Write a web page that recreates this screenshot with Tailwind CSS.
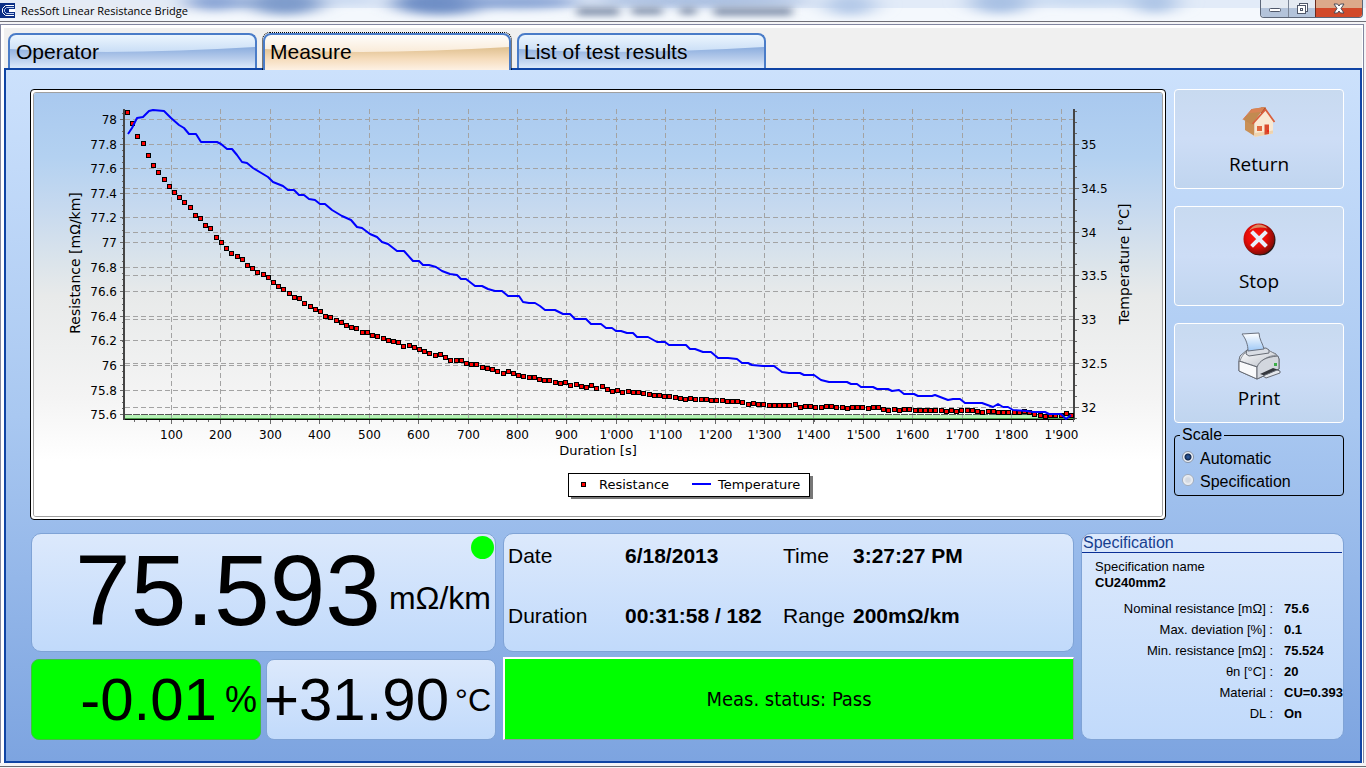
<!DOCTYPE html>
<html lang="en">
<head>
    <meta charset="UTF-8">
    <meta name="viewport" content="width=device-width, initial-scale=1.0">
    <title>ResSoft Linear Resistance Bridge</title>
    <script src="https://cdn.jsdelivr.net/npm/@tailwindcss/browser@4"></script>
</head>
<body class="min-h-screen flex flex-col bg-[#f4f4f6] font-['Liberation_Sans',Arial,sans-serif] text-black">

<!-- Title bar -->
<header class="relative h-[22px] flex items-start justify-between overflow-hidden border-b border-[#707078] bg-white">
    <svg class="absolute inset-0 w-full h-full" viewBox="0 0 1366 21" preserveAspectRatio="none" aria-hidden="true">
        <defs>
            <filter id="haze" x="-20%" y="-100%" width="140%" height="300%"><feGaussianBlur stdDeviation="12 4"/></filter>
            <filter id="smudge" x="-20%" y="-100%" width="140%" height="300%"><feGaussianBlur stdDeviation="5 3"/></filter>
        </defs>
        <rect width="1366" height="21" fill="#f4f8fd"/>
        <rect width="1366" height="8" fill="#e2ebf8"/>
        <g filter="url(#haze)">
            <ellipse cx="80" cy="10" rx="110" ry="9" fill="#e6ebf4"/>
            <ellipse cx="215" cy="2" rx="30" ry="9" fill="#8ba6d6"/>
            <ellipse cx="285" cy="3" rx="38" ry="12" fill="#7f9ccc"/>
            <ellipse cx="350" cy="0" rx="30" ry="3" fill="#b9cdec"/>
            <ellipse cx="440" cy="3" rx="48" ry="12" fill="#6f8fc6"/>
            <ellipse cx="520" cy="2" rx="60" ry="7" fill="#8ba6d6"/>
            <ellipse cx="700" cy="1" rx="110" ry="6" fill="#a5bbdf"/>
            <ellipse cx="850" cy="5" rx="25" ry="11" fill="#b4c9e8"/>
            <ellipse cx="1000" cy="2" rx="30" ry="12" fill="#a9c1e4"/>
            <ellipse cx="1090" cy="0" rx="60" ry="6" fill="#c5d8f1"/>
            <ellipse cx="1155" cy="2" rx="22" ry="12" fill="#adc5e6"/>
        </g>
        <g filter="url(#smudge)" fill="#8d9bb4">
            <rect x="577" y="7" width="42" height="9"/>
            <rect x="632" y="7" width="30" height="8"/>
            <rect x="680" y="7" width="16" height="8"/>
            <rect x="714" y="7" width="78" height="9"/>
        </g>
    </svg>
    <div class="relative flex items-center gap-[6px] h-[21px]">
        <svg class="w-[15px] h-[15px]" viewBox="0 0 15 15" aria-hidden="true">
            <rect width="15" height="15" fill="#0b2f86"/>
            <path d="M14 2.500H5.500L2.500 5.500v4l3 3H14" fill="none" stroke="#fff"/>
            <path d="M14 4.500H6.500L4.500 6.500v2l2 2H14" fill="none" stroke="#b9cdf4"/>
            <rect x="9" y="6" width="6" height="3" fill="#fff"/>
        </svg>
        <h1 class="font-['Open_Sans',sans-serif] text-[11px] leading-[20px]">ResSoft Linear Resistance Bridge</h1>
    </div>
    <div class="relative flex h-[18px] mr-[3px] rounded-b-[4px] border border-t-0 border-[#5c6678] overflow-hidden">
        <button type="button" aria-label="Minimize" class="w-[28px] flex items-center justify-center border-r border-[#7b8596] bg-linear-to-b from-[#e4eaf2] from-45% to-[#b3c3da] to-50%">
            <svg width="14" height="14" viewBox="0 0 14 14"><rect x="1.500" y="6.500" width="11" height="3" rx="1" fill="#fff" stroke="#50586a"/></svg>
        </button>
        <button type="button" aria-label="Restore" class="w-[26px] flex items-center justify-center bg-linear-to-b from-[#e4eaf2] from-45% to-[#b3c3da] to-50%">
            <svg width="14" height="14" viewBox="0 0 14 14" fill="#fff" stroke="#50586a"><rect x="4.500" y="1.500" width="8" height="8"/><rect x="2.500" y="3.500" width="8" height="8"/><rect x="5.500" y="6.500" width="2" height="2"/></svg>
        </button>
        <button type="button" aria-label="Close" class="w-[47px] flex items-center justify-center border-l border-[#6b2a1c] bg-linear-to-b from-[#dca98a] from-45% to-[#d2492a] to-50%">
            <svg width="14" height="14" viewBox="0 0 14 14"><path d="M2 2h3.500L7 4l1.500-2H12L9 6.500l3 4.500H8.500L7 9l-1.500 2H2l3-4.500z" fill="#fff" stroke="#4a4a58"/></svg>
        </button>
    </div>
</header>

<main class="flex-1 flex flex-col mt-[2px] mr-[2px] border-x border-t border-[#8286a0] bg-white pl-[3px] pr-[1px] pt-[3px]">
    <div class="flex-1 flex flex-col bg-[#f0f0f0]">

        <!-- Tabs -->
        <nav class="flex items-end gap-[5px] pt-[4px] pl-[4px] text-[21px] leading-[24px]">
            <button type="button" class="relative w-[249px] h-[35px] pl-[6px] text-left border-2 border-b-0 border-[#4a7cc8] rounded-t-[8px] overflow-hidden bg-linear-to-b from-[#ecf6fe] to-[#a9c6ee]">
                <svg class="absolute inset-0 w-full h-full" viewBox="0 0 245 33" preserveAspectRatio="none" aria-hidden="true"><path d="M0 14C80 19 160 17 245 12V33H0z" fill="url(#blueGloss)"/></svg>
                <span class="relative">Operator</span>
            </button>
            <div class="relative z-10 -mb-[2px] border border-b-0 border-dotted border-black rounded-t-[8px]">
                <button type="button" class="relative block w-[248px] h-[37px] pl-[5px] pb-[2px] text-left border-2 border-b-0 border-[#4a7cc8] rounded-t-[8px] overflow-hidden bg-linear-to-b from-[#fefdfb] to-[#f4d8b4]">
                    <svg class="absolute inset-0 w-full h-full" viewBox="0 0 245 35" preserveAspectRatio="none" aria-hidden="true"><path d="M0 14C80 19 160 17 245 12V35H0z" fill="url(#goldGloss)"/></svg>
                    <span class="relative">Measure</span>
                </button>
            </div>
            <button type="button" class="relative w-[249px] h-[35px] pl-[5px] text-left border-2 border-b-0 border-[#4a7cc8] rounded-t-[8px] overflow-hidden bg-linear-to-b from-[#ecf6fe] to-[#a9c6ee]">
                <svg class="absolute inset-0 w-full h-full" viewBox="0 0 245 33" preserveAspectRatio="none" aria-hidden="true"><path d="M0 14C80 19 160 17 245 12V33H0z" fill="url(#blueGloss)"/></svg>
                <span class="relative">List of test results</span>
            </button>
            <svg class="absolute w-0 h-0" aria-hidden="true">
                <defs>
                    <linearGradient id="blueGloss" x2="0" y2="1"><stop offset="0" stop-color="#8badde"/><stop offset=".5" stop-color="#b3c9ea"/><stop offset="1" stop-color="#dbe9fb"/></linearGradient>
                    <linearGradient id="goldGloss" x2="0" y2="1"><stop offset="0" stop-color="#dfc08f"/><stop offset=".5" stop-color="#f5dbba"/><stop offset="1" stop-color="#fdf1e4"/></linearGradient>
                </defs>
            </svg>
        </nav>

        <section class="flex-1 border-2 border-[#0f44a4] pt-[19px] pl-[24px] pr-[16px] pb-[20px] bg-linear-to-b from-[#cce1fc] via-[#a9c8f1] via-50% to-[#7da4e0]">
            <div class="flex items-start gap-[8px]">

                <!-- Chart -->
                <div class="flex-1 min-w-0 border border-black rounded-[4px] bg-white p-[2px]">
                    <div class="border border-[#a0a0a0] rounded-[3px] overflow-hidden">
                        <svg id="chart" class="block w-full font-['DejaVu_Sans',Verdana,sans-serif] text-[12px]" viewBox="34 93 1128 423">
                            <defs>
                                <linearGradient id="sky" x2="0" y2="1">
                                    <stop offset="0" stop-color="#a9c9ef"/>
                                    <stop offset=".15" stop-color="#b3d1f1"/>
                                    <stop offset=".27" stop-color="#c6d9ef"/>
                                    <stop offset=".4" stop-color="#dbe4eb"/>
                                    <stop offset=".48" stop-color="#e8eaea"/>
                                    <stop offset=".72" stop-color="#f4f4f4"/>
                                    <stop offset=".87" stop-color="#fff"/>
                                </linearGradient>
                            </defs>
                            <rect x="34" y="93" width="1128" height="423" fill="url(#sky)"/>
                            <rect x="125" y="415" width="949" height="3" fill="#b6f2b6"/>
                            <rect x="125" y="418" width="949" height="1" fill="#4c9a4c"/>
                            <g id="grid" stroke="#a3a3a3" stroke-dasharray="5 3"></g>
                            <path d="M125 414.500H1074" stroke="#555" stroke-dasharray="7 1"/>
                            <g id="ticks" stroke="#6a6a6a"></g>
                            <path d="M125 419.500H1074" stroke="#000"/>
                            <path d="M124 109V420M1074 109V420" stroke="#454545" stroke-width="2"/>
                            <g id="points" fill="#f00" stroke="#000"></g>
                            <path id="temperature" fill="none" stroke="#00f" stroke-width="2" stroke-linejoin="round"/>
                            <g id="labels"></g>
                            <g text-anchor="middle">
                                <text class="text-[13px]" x="598" y="455">Duration [s]</text>
                                <text class="text-[14px]" transform="translate(80 263) rotate(-90)">Resistance [mΩ/km]</text>
                                <text class="text-[14px]" transform="translate(1129 264) rotate(-90)">Temperature [°C]</text>
                            </g>
                            <!-- Legend -->
                            <rect x="571" y="476" width="242" height="23" fill="#555" opacity=".8"/>
                            <rect x="568.500" y="473.500" width="241" height="23" fill="#fff" stroke="#000"/>
                            <rect x="581.500" y="482.500" width="4" height="4" fill="#f00" stroke="#000"/>
                            <path d="M692 484H711" stroke="#00f" stroke-width="2"/>
                            <g class="text-[13px]">
                                <text x="599" y="489">Resistance</text>
                                <text x="718" y="489">Temperature</text>
                            </g>
                        </svg>
                    </div>
                </div>

                <!-- Actions -->
                <aside class="w-[170px] flex flex-col gap-[3px]">
                    <div class="flex flex-col gap-[17px] font-['Open_Sans',sans-serif] text-[19px] leading-[28px]">
                        <button type="button" class="h-[100px] flex flex-col items-center gap-[4px] pt-[8px] border border-white rounded-[4px] bg-linear-to-b from-[#c8daf0] via-[#cdddf6] via-50% to-[#c0d5ef]">
                            <svg width="48" height="48" viewBox="0 0 48 48" aria-hidden="true">
                                <path d="M26 9.500h5v8h-5z" fill="#a5542c"/>
                                <path d="M10 23v9l9.500 6V24l-4-5z" fill="#c98f55"/>
                                <path d="M19.500 22.500 30.500 12 38 23v12.500L19.500 39z" fill="#f9e8d2"/>
                                <path d="M19.500 39 38 35.500v-3L19.500 35z" fill="#efd3ae"/>
                                <path d="M8 21.500 17 11l13-2-11.500 15.500-2 2z" fill="#c28a50"/>
                                <path d="m17 11 13-2-3.500 5-12 1z" fill="#d98355"/>
                                <path d="m17.500 26 13-14.500L39.500 24" fill="none" stroke="#d95f3c" stroke-width="1.800"/>
                                <path d="M8 21.500 17 11" stroke="#dd7a55"/>
                                <rect x="22" y="28" width="5" height="5" fill="#e0683f"/>
                                <path d="M29.500 26.500h4.500v9.500l-4.500.8z" fill="#d94a2d"/>
                                <circle cx="33" cy="33" r=".8" fill="#f00"/>
                            </svg>
                            Return
                        </button>
                        <button type="button" class="h-[100px] flex flex-col items-center gap-[4px] pt-[8px] border border-white rounded-[4px] bg-linear-to-b from-[#c8daf0] via-[#cdddf6] via-50% to-[#c0d5ef]">
                            <svg width="48" height="48" viewBox="0 0 48 48" aria-hidden="true">
                                <defs>
                                    <radialGradient id="stopRed" cx=".42" cy=".42" r=".65"><stop offset="0" stop-color="#ff1a12"/><stop offset=".5" stop-color="#e80c08"/><stop offset="1" stop-color="#6e0c06"/></radialGradient>
                                </defs>
                                <circle cx="25" cy="25" r="15.500" fill="#241a18"/>
                                <circle cx="24" cy="24" r="15.500" fill="url(#stopRed)"/>
                                <path d="M14 16C17 11 21 9.500 24 9.500s6 1 8.500 4C27 12 19 12 14 16z" fill="#d98a62"/>
                                <path d="m18 18 12 12m0-12L18 30" stroke="#e6effb" stroke-width="4" stroke-linecap="square"/>
                            </svg>
                            Stop
                        </button>
                        <button type="button" class="h-[100px] flex flex-col items-center gap-[4px] pt-[8px] border border-white rounded-[4px] bg-linear-to-b from-[#c8daf0] via-[#cdddf6] via-50% to-[#c0d5ef]">
                            <svg width="48" height="48" viewBox="0 0 48 48" stroke-linejoin="round" aria-hidden="true">
                                <defs>
                                    <linearGradient id="paper" x2="0" y2="1"><stop offset="0" stop-color="#fff"/><stop offset="1" stop-color="#9ec8f6"/></linearGradient>
                                    <linearGradient id="lid" x2="1" y2="1"><stop offset="0" stop-color="#fff"/><stop offset="1" stop-color="#b9bec8"/></linearGradient>
                                </defs>
                                <path d="M4 28 5 24l7-6h20l9 4 3 5v10l-22 10L4 39z" fill="#eceef2" stroke="#666b74"/>
                                <path d="M5 29c1-4 4-8 8-10l20-1 9 5c-9 1-15 4-19 12z" fill="url(#lid)" stroke="#8b9099"/>
                                <path d="m4 29 18 6v12L4 39z" fill="#f8f9fb" stroke="#666b74"/>
                                <path d="M22 35c3-7 9-10 21-11l1 3v10l-22 10z" fill="#d3d7de" stroke="#666b74"/>
                                <path d="m11 22 1-4 19-2 3 2v3l-20 3z" fill="#d9dde4" stroke="#666b74"/>
                                <path d="M7 2 24 1c0 6 4 11 5 16l-16 2C13 13 11 7 7 2z" fill="url(#paper)" stroke="#6b7280"/>
                                <path d="m25 42 13-6 6 2-13 6z" fill="#34373d"/>
                                <path d="m28 44 14-6 3 1v2l-14 5z" fill="#e4e7ec" stroke="#666b74"/>
                                <rect x="39" y="31" width="3" height="3" fill="#3fae4a"/>
                            </svg>
                            Print
                        </button>
                    </div>
                    <fieldset class="border border-black rounded-[4px] pl-[7px] pr-[5px] pt-[3px] pb-[2px] text-[16px] leading-[23px]">
                        <legend class="-ml-[2px] px-[2px] leading-[18px]">Scale</legend>
                        <label class="flex items-center gap-[6px] h-[23px]">
                            <input type="radio" name="scale" checked class="appearance-none w-[12px] h-[12px] -mt-[4px] rounded-full border border-[#8a96a8] bg-[radial-gradient(circle,#2a5596_0_1px,#12294f_3px,#eef2f8_4px)]">
                            Automatic
                        </label>
                        <label class="flex items-center gap-[6px] h-[23px]">
                            <input type="radio" name="scale" class="appearance-none w-[12px] h-[12px] -mt-[4px] rounded-full border border-[#a3adbb] bg-[radial-gradient(circle,#d3d9e2_0_2px,#f4f6f9_5px)]">
                            Specification
                        </label>
                    </fieldset>
                </aside>
            </div>

            <!-- Readings -->
            <div class="grid grid-cols-[465fr_571fr_263fr] gap-[7px] mt-[13px] pl-[1px]">
                <div class="min-w-0 flex flex-col gap-[7px]">
                    <div class="relative h-[119px] flex items-center justify-end rounded-[10px] border border-[#7fa3d6] pr-[4px] bg-linear-to-b from-[#dce9fc] to-[#c1dafb]">
                        <span class="text-[100px] leading-[100px] pb-[6px]">75.593</span>
                        <span class="text-[32px] ml-[8px] mt-[10px]">mΩ/km</span>
                        <span class="absolute top-[2px] right-px w-[23px] h-[23px] rounded-full bg-[#00ff00]"></span>
                    </div>
                    <div class="grid grid-cols-2 gap-[5px]">
                        <div class="h-[81px] flex items-center justify-end rounded-[8px] border border-[#3fc040] pr-[3px] bg-[#00ff00] leading-[60px]">
                            <span class="text-[60px]">-0.01</span>
                            <span class="text-[36px] ml-[8px]">%</span>
                        </div>
                        <div class="h-[81px] flex items-center justify-end rounded-[8px] border border-[#7fa3d6] pr-[4px] bg-linear-to-b from-[#dce9fc] to-[#c1dafb] leading-[60px]">
                            <span class="text-[60px]">+31.90</span>
                            <span class="text-[32px] ml-[6px]">°C</span>
                        </div>
                    </div>
                </div>

                <div class="min-w-0 flex flex-col gap-[5px]">
                    <div class="h-[119px] grid grid-cols-[117px_158px_70px_1fr] content-start gap-y-[36px] rounded-[10px] border border-[#7fa3d6] pl-[4px] pt-[10px] text-[21px] leading-[24px] bg-linear-to-b from-[#dce9fc] to-[#c1dafb]">
                        <span>Date</span>
                        <b>6/18/2013</b>
                        <span>Time</span>
                        <b>3:27:27 PM</b>
                        <span>Duration</span>
                        <b>00:31:58 / 182</b>
                        <span>Range</span>
                        <b>200mΩ/km</b>
                    </div>
                    <div class="h-[83px] flex items-center justify-center border-t-2 border-l-2 border-b border-r border-t-white border-l-white border-b-[#8a98a8] border-r-[#8a98a8] bg-[#00ff00] font-['DejaVu_Sans_Condensed','DejaVu_Sans',sans-serif] text-[20px]">Meas. status: Pass</div>
                </div>

                <div class="min-w-0 rounded-[10px] border border-[#7fa3d6] text-[13px] bg-linear-to-b from-[#dce9fc] to-[#c1dafb]">
                    <h2 class="border-b border-[#0a2f96] pl-px mr-px text-[16px] leading-[18px] text-[#173f8f]">Specification</h2>
                    <p class="pl-[13px] pt-[6px] leading-[16px]">Specification name<br><b>CU240mm2</b></p>
                    <table class="mt-[7px] leading-[21px] whitespace-nowrap">
                        <tbody>
                        <tr><th class="w-[191px] p-0 text-right font-normal">Nominal resistance [mΩ] :</th><td class="py-0 pl-[11px] font-bold">75.6</td></tr>
                        <tr><th class="p-0 text-right font-normal">Max. deviation [%] :</th><td class="py-0 pl-[11px] font-bold">0.1</td></tr>
                        <tr><th class="p-0 text-right font-normal">Min. resistance [mΩ] :</th><td class="py-0 pl-[11px] font-bold">75.524</td></tr>
                        <tr><th class="p-0 text-right font-normal">θn [°C] :</th><td class="py-0 pl-[11px] font-bold">20</td></tr>
                        <tr><th class="p-0 text-right font-normal">Material :</th><td class="py-0 pl-[11px] font-bold">CU=0.393</td></tr>
                        <tr><th class="p-0 text-right font-normal">DL :</th><td class="py-0 pl-[11px] font-bold">On</td></tr>
                        </tbody>
                    </table>
                </div>
            </div>
        </section>
    </div>
</main>
<footer class="mt-[3px] h-[2px] border-t border-[#6a6a70]"></footer>

<script>
    // Marker heights, one per sample (182 samples)
    const resistance = [
        112, 123, 136, 143, 155, 165, 172, 179, 186, 192, 197, 202, 207, 215, 218, 225, 228, 237, 242, 248,
        253, 256, 259, 265, 268, 272, 274, 277, 282, 286, 289, 293, 297, 298, 303, 306, 309, 311, 316, 317,
        320, 322, 325, 327, 328, 332, 332, 335, 336, 338, 340, 341, 342, 346, 345, 347, 349, 351, 353, 355,
        354, 357, 360, 360, 360, 363, 364, 364, 367, 368, 369, 371, 373, 371, 373, 375, 376, 377, 377, 379,
        380, 380, 382, 383, 382, 385, 384, 386, 387, 385, 388, 386, 389, 391, 390, 392, 391, 392, 392, 393,
        394, 395, 395, 396, 396, 397, 398, 399, 398, 399, 399, 399, 400, 400, 400, 401, 401, 401, 402, 404,
        403, 404, 404, 405, 405, 405, 405, 405, 404, 407, 406, 406, 407, 407, 406, 406, 407, 407, 408, 407,
        407, 407, 408, 407, 407, 409, 410, 409, 410, 409, 409, 410, 410, 410, 410, 410, 410, 411, 410, 411,
        410, 410, 410, 411, 412, 411, 411, 412, 412, 412, 412, 412, 411, 412, 414, 415, 416, 415, 415, 415,
        413, 415
    ];

    // Temperature curve
    const temperature = [
        [128, 134], [132, 128], [137, 118], [143, 117], [149, 111], [153, 110], [164, 111], [171, 118], [179, 125], [184, 128],
        [189, 134], [196, 134], [201, 142], [217, 142], [221, 144], [227, 149], [232, 149], [237, 155], [242, 162], [247, 163],
        [253, 168], [268, 177], [273, 182], [283, 186], [288, 190], [294, 190], [299, 195], [304, 195], [309, 199], [315, 200],
        [320, 204], [325, 204], [332, 210], [342, 216], [351, 220], [357, 227], [362, 228], [370, 234], [377, 237], [382, 242],
        [388, 244], [397, 251], [404, 251], [413, 261], [419, 261], [423, 265], [429, 265], [436, 267], [442, 271], [450, 274],
        [457, 275], [461, 279], [466, 279], [475, 286], [482, 286], [488, 289], [495, 291], [502, 291], [508, 296], [519, 296],
        [523, 302], [529, 303], [535, 303], [540, 306], [545, 310], [555, 310], [563, 314], [570, 314], [575, 319], [586, 319],
        [591, 324], [601, 324], [606, 328], [612, 328], [616, 331], [621, 331], [627, 333], [633, 333], [637, 337], [648, 337],
        [657, 342], [665, 342], [669, 345], [686, 345], [690, 349], [695, 349], [703, 352], [711, 352], [718, 358], [728, 358],
        [737, 359], [742, 363], [748, 363], [752, 365], [763, 366], [774, 366], [782, 372], [789, 373], [800, 373], [804, 375],
        [814, 375], [821, 380], [829, 382], [847, 382], [851, 384], [857, 384], [861, 387], [873, 387], [877, 389], [888, 389],
        [892, 391], [899, 390], [904, 394], [914, 394], [918, 396], [932, 396], [935, 395], [948, 400], [953, 399], [960, 399],
        [965, 403], [982, 403], [993, 407], [998, 404], [1003, 407], [1008, 407], [1013, 410], [1027, 411], [1033, 412], [1045, 412],
        [1049, 414], [1061, 414], [1066, 419], [1071, 415]
    ];

    function line(x1, y1, x2, y2) {
        return `<path d="M${x1} ${y1}L${x2} ${y2}"/>`;
    }

    const px = v => Math.round(v) + 0.5;
    let grid = '', ticks = '', labels = '';

    // Duration axis
    for (let i = 0; i < 19; i++) {
        const x = px(171 + i * 49.42);
        const value = String((i + 1) * 100).replace(/^1(\d{3})$/, "1'$1");
        grid += line(x, 109, x, 419);
        ticks += line(x, 420, x, 424);
        labels += `<text x="${x}" y="439" text-anchor="middle">${value}</text>`;
    }
    for (let x = 134; x < 1074; x += 12.355) ticks += line(px(x), 420, px(x), 422);

    // Resistance axis
    for (let i = 0; i < 13; i++) {
        const y = px(119 + i * 24.6);
        grid += line(125, y, 1074, y);
        ticks += line(120, y, 124, y);
        labels += `<text x="117" y="${y + 4}" text-anchor="end">${+(78 - i * 0.2).toFixed(1)}</text>`;
    }
    for (let y = 113; y < 419; y += 6.15) ticks += line(122, px(y), 124, px(y));

    // Temperature axis
    for (let i = 0; i < 7; i++) {
        const y = px(144 + i * 43.8);
        grid += line(125, y, 1074, y);
        ticks += line(1075, y, 1079, y);
        labels += `<text x="1081" y="${y + 4}">${35 - i * 0.5}</text>`;
    }
    for (let y = 111; y < 419; y += 10.96) ticks += line(1075, px(y), 1077, px(y));

    document.getElementById('grid').innerHTML = grid;
    document.getElementById('ticks').innerHTML = ticks;
    document.getElementById('labels').innerHTML = labels;
    document.getElementById('points').innerHTML = resistance
        .map((y, i) => `<rect x="${px(125 + i * 5.2155)}" y="${y - 1.5}" width="4" height="4"/>`)
        .join('');
    document.getElementById('temperature').setAttribute('d', 'M' + temperature.join('L'));
</script>
</body>
</html>
